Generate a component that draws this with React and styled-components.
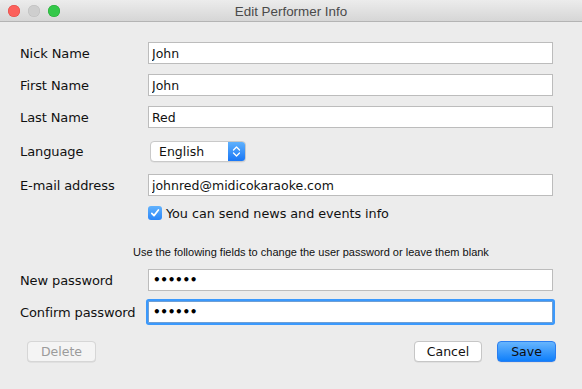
import React from "react";
import styled, { createGlobalStyle, css } from "styled-components";

const Global = createGlobalStyle`
  html, body { margin: 0; padding: 0; background: #ececec; }
  body { font-family: "DejaVu Sans", "Liberation Sans", sans-serif; }
  * { box-sizing: border-box; }
`;

const Window = styled.div`
  width: 582px;
  height: 389px;
  background: #ececec;
  border-radius: 5px;
  overflow: hidden;
  display: flex;
  flex-direction: column;
`;

const TitleBar = styled.div`
  height: 22px;
  flex: none;
  background: linear-gradient(#ececec, #d6d6d6);
  border-bottom: 1px solid #b4b4b4;
  display: grid;
  grid-template-columns: 1fr auto 1fr;
  align-items: center;
  padding: 0 8px;
`;

const Lights = styled.div`
  display: flex;
  gap: 8px;
`;

const colors = {
  close: ["#fc605b", "#de4842"],
  min: ["#cecece", "#bcbcbc"],
  max: ["#34c84a", "#23a833"],
};

const Light = styled.span`
  width: 12px;
  height: 12px;
  border-radius: 50%;
  background: ${(p) => colors[p.$kind][0]};
  box-shadow: inset 0 0 0 0.5px ${(p) => colors[p.$kind][1]};
`;

const Title = styled.div`
  font-family: "Liberation Sans", Arial, sans-serif;
  font-size: 13.4px;
  color: #4a4a4a;
  padding-top: 1px;
`;

const Body = styled.div`
  flex: 1;
  padding: 20px 29px 0 20px;
  display: flex;
  flex-direction: column;
`;

const Row = styled.div`
  display: grid;
  grid-template-columns: 128px 1fr;
  align-items: center;
  height: ${(p) => p.$h || 22}px;
  margin-top: ${(p) => p.$mt || 0}px;
`;

const Label = styled.div`
  font-size: 13px;
  color: #111;
  letter-spacing: -0.1px;
`;

const Field = styled.input`
  width: 405px;
  height: 22px;
  border: 1px solid #bcbcbc;
  background: #fff;
  font-family: "DejaVu Sans", sans-serif;
  font-size: 12.5px;
  color: #111;
  padding: 0 3px;
  margin: 0;
  outline: none;
  border-radius: 0;
  ${(p) =>
    p.$focus &&
    css`
      border-color: #6e9fd5;
      box-shadow: 0 0 0 2px #3b99fc;
      border-radius: 1px;
    `}
  ${(p) =>
    p.type === "password" &&
    css`
      font-size: 12px;
      font-weight: bold;
      color: #000;
      letter-spacing: -0.3px;
      padding-left: 4px;
    `}
`;

const Popup = styled.div`
  width: 96px;
  height: 21px;
  display: flex;
  border: 1px solid #c9c9c9;
  border-radius: 4px;
  background: #fff;
  overflow: hidden;
  margin-left: 2px;
  box-shadow: 0 0.5px 0 rgba(0, 0, 0, 0.08);
`;

const PopupText = styled.div`
  flex: 1;
  font-size: 12.5px;
  color: #111;
  padding-left: 8px;
  display: flex;
  align-items: center;
`;

const PopupArrow = styled.div`
  width: 17px;
  background: linear-gradient(#5fb1fd, #1977f6);
  display: flex;
  align-items: center;
  justify-content: center;
`;

const CheckRow = styled.label`
  display: flex;
  align-items: center;
  gap: 4px;
  font-size: 12.8px;
  color: #111;
  letter-spacing: -0.05px;
`;

const CheckBox = styled.span`
  width: 14px;
  height: 14px;
  border-radius: 3px;
  background: linear-gradient(#61b2fd, #2a86f8);
  display: flex;
  align-items: center;
  justify-content: center;
`;

const Hint = styled.div`
  grid-column: 1 / 3;
  padding-left: 113px;
  font-family: "Liberation Sans", Arial, sans-serif;
  font-size: 11px;
  color: #111;
`;

const Footer = styled.div`
  display: flex;
  align-items: center;
  padding: 0 26px 0 27px;
  margin-top: 18px;
  gap: 15px;
`;

const Spacer = styled.div`
  flex: 1;
`;

const Button = styled.button`
  height: 21px;
  min-width: ${(p) => p.$w}px;
  border-radius: 4px;
  font-family: "DejaVu Sans", sans-serif;
  font-size: 12.5px;
  padding: 0 10px;
  margin: 0;
  border: 1px solid #c6c6c6;
  background: #fff;
  color: #111;
  box-shadow: 0 0.5px 0 rgba(0, 0, 0, 0.1);
  ${(p) =>
    p.$variant === "disabled" &&
    css`
      background: #f4f4f4;
      color: #9b9b9b;
      border-color: #d6d6d6;
    `}
  ${(p) =>
    p.$variant === "primary" &&
    css`
      background: linear-gradient(#67b5fd, #0f7ffb);
      border-color: #2a7ef0;
      color: #0d0d0d;
    `}
`;

function Arrows() {
  return (
    <svg width="9" height="13" viewBox="0 0 9 13">
      <path d="M1.5 5 L4.5 2 L7.5 5 M1.5 8 L4.5 11 L7.5 8" fill="none" stroke="#fff" strokeWidth="1.3" strokeLinecap="round" strokeLinejoin="round" />
    </svg>
  );
}

function Check() {
  return (
    <svg width="10" height="10" viewBox="0 0 10 10">
      <path d="M1.8 5.3 L4 7.6 L8.4 2" fill="none" stroke="#fff" strokeWidth="1.7" strokeLinecap="round" strokeLinejoin="round" />
    </svg>
  );
}

export default function App() {
  return (
    <>
      <Global />
      <Window>
        <TitleBar>
          <Lights>
            <Light $kind="close" />
            <Light $kind="min" />
            <Light $kind="max" />
          </Lights>
          <Title>Edit Performer Info</Title>
          <div />
        </TitleBar>
        <Body>
          <Row>
            <Label>Nick Name</Label>
            <Field defaultValue="John" />
          </Row>
          <Row $mt={10}>
            <Label>First Name</Label>
            <Field defaultValue="John" />
          </Row>
          <Row $mt={10}>
            <Label>Last Name</Label>
            <Field defaultValue="Red" />
          </Row>
          <Row $mt={13} $h={21}>
            <Label>Language</Label>
            <Popup>
              <PopupText>English</PopupText>
              <PopupArrow>
                <Arrows />
              </PopupArrow>
            </Popup>
          </Row>
          <Row $mt={12}>
            <Label>E-mail address</Label>
            <Field defaultValue="johnred@midicokaraoke.com" />
          </Row>
          <Row $mt={9} $h={16}>
            <div />
            <CheckRow>
              <CheckBox>
                <Check />
              </CheckBox>
              You can send news and events info
            </CheckRow>
          </Row>
          <Row $mt={24} $h={14}>
            <Hint>Use the following fields to change the user password or leave them blank</Hint>
          </Row>
          <Row $mt={10}>
            <Label>New password</Label>
            <Field type="password" defaultValue="123456" />
          </Row>
          <Row $mt={10}>
            <Label>Confirm password</Label>
            <Field type="password" defaultValue="123456" $focus />
          </Row>
        </Body>
        <Footer>
          <Button $variant="disabled" $w={69}>Delete</Button>
          <Spacer />
          <Button $w={68}>Cancel</Button>
          <Button $variant="primary" $w={59}>Save</Button>
        </Footer>
        <Spacer />
      </Window>
    </>
  );
}
